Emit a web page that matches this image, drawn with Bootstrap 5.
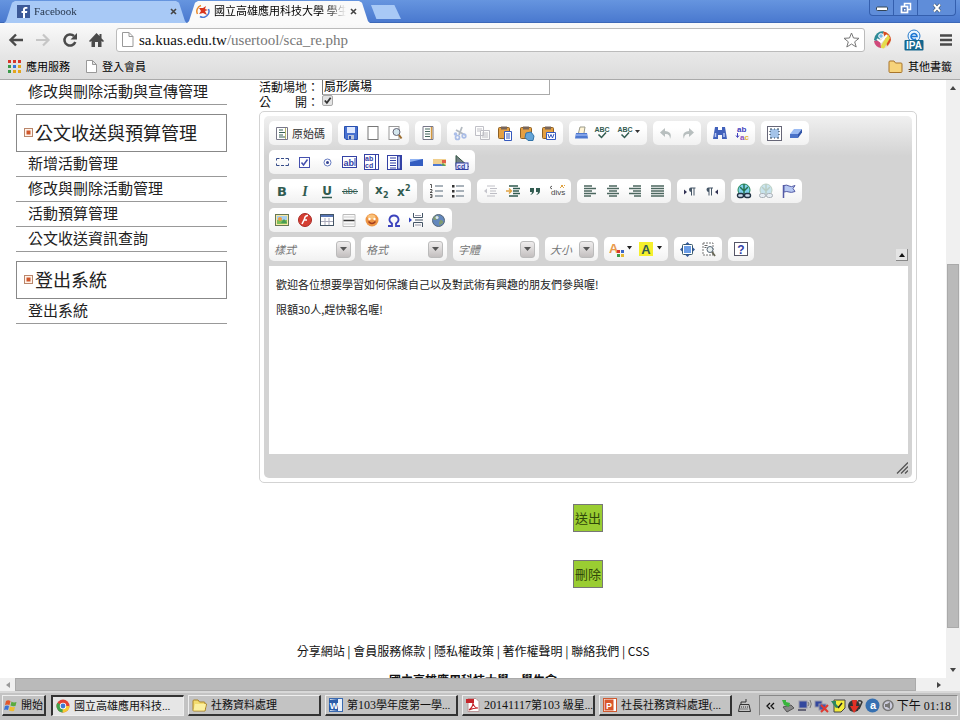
<!DOCTYPE html>
<html lang="zh-Hant">
<head>
<meta charset="utf-8">
<meta name="viewport" content="width=device-width, initial-scale=1">
<title>國立高雄應用科技大學 學生會</title>
<link href="https://cdn.jsdelivr.net/npm/bootstrap@5.3.0/dist/css/bootstrap.min.css" rel="stylesheet">
<style>
  body { font-family: "Noto Sans CJK TC", "Liberation Sans", sans-serif; font-size: 12px; line-height: 16px; color: #111; background: #fff; }
  button { background: none; border: 0; padding: 0; color: inherit; }
  svg { display: block; flex: none; }
  .serif-mix { font-family: "Liberation Serif", "Noto Sans CJK TC", serif; }
  a { color: inherit; text-decoration: none; }

  /* window title bar */
  .titlebar { height: 23px; background: linear-gradient(#6695df, #4a79cf); border-bottom: 1px solid #3c68b8; }
  .tab-shape { width: 183px; height: 22px; margin-top: 1px; padding: 0 10px 2px 13px; gap: 4px; font-size: 11px; clip-path: polygon(0 100%, 2px 92%, 8px 8%, 11px 0, calc(100% - 11px) 0, calc(100% - 8px) 8%, calc(100% - 2px) 92%, 100% 100%); background: #a8c9f6; color: #26364c; }
  .tab-shape.current { background: #fafafa; color: #000; padding-left: 9px; padding-right: 13px; }
  .tab-text { mask-image: linear-gradient(90deg, #000 85%, transparent); -webkit-mask-image: linear-gradient(90deg, #000 85%, transparent); white-space: nowrap; overflow: hidden; }
  .new-tab { width: 30px; height: 14px; margin: 5px 0 0 1px; background: #a8c9f6; clip-path: polygon(0 0, 78% 0, 100% 100%, 18% 100%); }
  .win-btns { height: 16px; border: 1px solid #345fae; border-top: 0; border-radius: 0 0 4px 4px; margin-right: 4px; background: #5f8dd9; }
  .win-btns button { width: 24px; border-right: 1px solid #345fae; display: flex; justify-content: center; align-items: center; }
  .win-btns button:last-child { width: 37px; border-right: 0; }

  /* navigation and bookmarks */
  .navrow { height: 33px; padding: 0 8px; background: linear-gradient(#fafafa, #e6e6e6); }
  .navbtn { width: 27px; height: 24px; display: flex; align-items: center; }
  .omnibox { height: 24px; border: 1px solid #bbb; border-radius: 3px; background: #fff; padding: 0 4px; gap: 5px; font-size: 15px; }
  .url-wrap { color: #777; white-space: nowrap; }
  .url-wrap b { font-weight: 400; color: #111; }
  .bookrow { height: 24px; padding: 0 8px 3px; background: linear-gradient(#e6e6e6, #dcdcdc); border-bottom: 1px solid #aaa; font-size: 11px; color: #000; }
  .bookrow a { gap: 5px; }

  /* page viewport */
  .pane { min-height: 0; }
  .page-area { min-width: 0; overflow: hidden; }
  .side-menu { flex: 0 0 211px; margin-left: 16px; }
  .side-link { display: block; height: 25px; padding: 0 12px; font-size: 15px; line-height: 22px; border-bottom: 1px solid #999; color: #222; }
  .side-head { height: 38px; margin-top: 9px; padding-left: 7px; gap: 2px; border: 1px solid #888; font-size: 18px; line-height: 24px; color: #222; font-weight: 400; margin-bottom: 0; padding-bottom: 2px; }
  .main-col { margin: 0 29px 0 32px; min-width: 0; }
  .lbl { width: 63px; line-height: 14px; }
  .place { width: 228px; height: 15px; border: 1px solid #aaa; border-top: 0; border-left-color: #777; font-size: 12px; line-height: 12px; padding: 0 1px 3px; outline: 0; }
  .tick { appearance: none; width: 11px; height: 11px; border: 1px solid #aaa; border-radius: 2px; margin: 0; background: #e4e4e4; }
  .tick:checked { background: #e4e4e4 url("data:image/svg+xml,%3Csvg xmlns='http://www.w3.org/2000/svg' viewBox='0 0 10 10'%3E%3Cpath d='M2 5l2.3 2.6L8.5 2' fill='none' stroke='%23333' stroke-width='2'/%3E%3C/svg%3E") center/9px 9px no-repeat; }

  /* rich text editor */
  .editor-frame { margin-top: 2px; border: 1px solid #d3d3d3; border-radius: 5px; padding: 4px; }
  .editor-skin { border-radius: 5px; padding: 5px 4px 0 5px; background: #d3d3d3 linear-gradient(#f0f0f0, #d3d3d3) 0 0/100% 40px no-repeat; }
  .tool-rows { display: flex; flex-direction: column; gap: 5px; padding-bottom: 5px; }
  .tool-row { display: flex; gap: 6px; }
  .grp { height: 24px; border-radius: 5px; background: linear-gradient(#fff 30%, #f1f1f1); display: flex; align-items: center; padding: 0 2px; flex: none; }
  .grp button { flex: 1; height: 22px; display: flex; align-items: center; justify-content: center; }
  .g1 { width: 26px; } .g2 { width: 48px; } .g3 { width: 71px; } .g4 { width: 94px; } .g5 { width: 116px; } .g8 { width: 183px; } .g9 { width: 206px; }
  .g-src { width: 63px; } .g-src button { gap: 4px; font-size: 11px; color: #333; }
  .g-spell { width: 78px; } .g-spell button:last-child, .g-color button { flex: 1 0 30px; }
  .g-spell button:last-child { flex-basis: 12px; }
  .g-color { width: 64px; }
  .faded { opacity: .4; }
  .pick { width: 86px; display: grid; align-items: center; padding: 0 4px 0 5px; }
  .pick.narrow { width: 53px; }
  .pick > * { grid-area: 1 / 1; }
  .pick select { appearance: none; border: 0; background: none; font-size: 11px; font-style: italic; color: #777; padding: 0; line-height: 16px; outline: 0; width: 100%; }
  .pick .drop { justify-self: end; pointer-events: none; width: 15px; height: 17px; border: 1px solid #bbb; border-radius: 3px; background: linear-gradient(#f0eeee, #c3bfbf); display: flex; align-items: center; justify-content: center; }
  .collapse-btn { width: 12px; height: 12px; border-right: 1px solid #888; border-bottom: 1px solid #888; background: #e4e4e4; display: flex; align-items: center; justify-content: center; }
  .edit-body { height: 188px; background: #fff; padding: 10px 7px; font-size: 11px; color: #222; }
  .edit-body p { margin: 0 0 9px; }
  .edit-foot { height: 24px; padding-top: 4px; }

  .act { width: 30px; height: 28px; border: 1px solid #777; background: #9acd32; font-size: 13px; color: #30480a; display: block; margin: 0 auto; }
  .act-box { padding-top: 21px; gap: 28px; }
  .foot { margin-top: 55px; }
  .foot-name { padding-top: 13px; }

  /* scroll bars */
  .vbar { width: 14px; background: #f0f0f0; }
  .hbar { height: 13px; background: #f0f0f0; }
  .thumb { background: #bababa; border: 1px solid #aaa; }
  .cap-v { height: 16px; } .cap-h { width: 15px; }
  .up-grow { flex: 169 0 0; } .thumb-grow { flex: 363 0 0; margin: 0 1px; } .down-grow { flex: 34 0 0; }
  .corner { width: 14px; }

  /* task bar */
  .taskbar { height: 29px; padding: 2px 2px 4px; background: #c3c3c3; border-top: 2px solid #d8d8d8; gap: 4px; font-size: 12px; }
  .task { flex: 0 1 133px; min-width: 0; height: 21px; padding: 0 3px; gap: 4px; display: flex; align-items: center; white-space: nowrap; font-size: 11px; background: #c3c3c3; border: 1px solid #eee; border-right: 2px solid #333; border-bottom: 2px solid #333; }
  .task.start { flex: 0 0 44px; padding: 0 1px; margin-right: 1px; gap: 3px; }
  .task.pressed { background: #e6e6e6; border: 1px solid #eee; border-left: 2px solid #333; border-top: 2px solid #333; }
  .task .latin { font-size: 12px; }
  .tray { height: 21px; border: 1px solid #888; border-right-color: #eee; border-bottom-color: #eee; padding: 0 6px; gap: 2px; flex: 0 0 198px; }
</style>
<script src="https://cdn.jsdelivr.net/npm/bootstrap@5.3.0/dist/js/bootstrap.bundle.min.js"></script>
</head>
<body class="vh-100 d-flex flex-column overflow-hidden m-0">

<header class="flex-shrink-0">
  <div class="titlebar d-flex align-items-start ps-1">
    <div class="tab-shape d-flex align-items-center serif-mix">
      <svg width="13" height="13" viewBox="0 0 13 13"><rect width="13" height="13" fill="#3b5998"/><path d="M8 13V8h2l.3-2H8V4.600q0-.9 1-.9h1.400V2H8.500Q6 2 6 4.500V6H4.500v2H6v5z" fill="#fff"/></svg>
      <span class="tab-text flex-grow-1">Facebook</span>
      <button aria-label="關閉 Facebook"><svg width="7" height="7" viewBox="0 0 7 7"><path d="M1 1l5 5M6 1L1 6" stroke="#444" stroke-width="1.600"/></svg></button>
    </div>
    <div class="tab-shape current d-flex align-items-center serif-mix">
      <svg width="14" height="14" viewBox="0 0 14 14"><path d="M1.500 10A6 6 0 0 1 5 1.500" fill="none" stroke="#e98a2b" stroke-width="1.500"/><path d="M12.500 5A6 6 0 0 1 4 12.500" fill="none" stroke="#4b79d6" stroke-width="1.500"/><path d="M3 4h4l3-2-1 3 3 1-3 1 2 4-4-2-4 1 2-3z" fill="#d8351d"/></svg>
      <span class="tab-text flex-grow-1">國立高雄應用科技大學 學生會</span>
      <button aria-label="關閉分頁"><svg width="7" height="7" viewBox="0 0 7 7"><path d="M1 1l5 5M6 1L1 6" stroke="#444" stroke-width="1.600"/></svg></button>
    </div>
    <button class="new-tab" aria-label="新分頁"></button>
    <div class="win-btns d-flex ms-auto">
      <button aria-label="最小化"><svg width="12" height="6" viewBox="0 0 12 6"><rect x=".5" y="2" width="11" height="3.500" rx="1" fill="#fff" stroke="#345"/></svg></button>
      <button aria-label="還原"><svg width="12" height="12" viewBox="0 0 12 12"><rect x="4.500" y="1.500" width="6" height="6" fill="none" stroke="#fff" stroke-width="1.500"/><rect x="1.500" y="4.500" width="6" height="6" fill="#5077bb" stroke="#fff" stroke-width="1.700"/><rect x="4" y="7" width="1.500" height="1.500" fill="#fff"/></svg></button>
      <button aria-label="關閉"><svg width="10" height="10" viewBox="0 0 10 10"><path d="M2 1.500l6 7M8 1.500l-6 7" stroke="#345" stroke-width="3.200"/><path d="M2 1.500l6 7M8 1.500l-6 7" stroke="#fff" stroke-width="2"/></svg></button>
    </div>
  </div>

  <nav class="navrow d-flex align-items-center" aria-label="瀏覽">
    <button class="navbtn" aria-label="上一頁"><svg width="16" height="14" viewBox="0 0 16 14"><path d="M15 7H3M8 1.500L2.500 7 8 12.500" fill="none" stroke="#4a4a4a" stroke-width="2.400"/></svg></button>
    <button class="navbtn" aria-label="下一頁"><svg width="16" height="14" viewBox="0 0 16 14"><path d="M1 7h12M8 1.500L13.500 7 8 12.500" fill="none" stroke="#c6c6c6" stroke-width="2.200"/></svg></button>
    <button class="navbtn" aria-label="重新載入"><svg width="16" height="16" viewBox="0 0 16 16"><path d="M13.300 10A5.600 5.600 0 1 1 12 4" fill="none" stroke="#4a4a4a" stroke-width="2.500"/><path d="M15 1v6.500H8.500z" fill="#4a4a4a"/></svg></button>
    <button class="navbtn" aria-label="首頁"><svg width="15" height="16" viewBox="0 0 15 16"><path d="M7.500 1L0 9l1 1 1.500-1v6h3.500v-5h3v5h3.500V9l1.500 1 1-1-2.500-2.800V2h-2v2z" fill="#4a4a4a"/></svg></button>
    <div class="omnibox d-flex align-items-center flex-grow-1 serif-mix">
      <svg width="13" height="15" viewBox="0 0 13 15"><path d="M1.500.500h6.500l4 4v10h-10.500zM8 .500v4h4" fill="#fff" stroke="#999"/></svg>
      <a class="url-wrap flex-grow-1" href="#"><b>sa.kuas.edu.tw</b>/usertool/sca_re.php</a>
      <button aria-label="加入書籤"><svg width="17" height="16" viewBox="0 0 17 16"><path d="M8.500 1l2 5 5.500.300-4.300 3.500 1.500 5.200-4.700-3-4.700 3 1.500-5.200L1 6.300 6.500 6z" fill="#fff" stroke="#777" stroke-linejoin="round"/></svg></button>
    </div>
    <button class="ms-2" aria-label="擴充功能"><svg width="19" height="18" viewBox="0 0 19 18"><circle cx="9.500" cy="9" r="8.500" fill="#e7dcc7"/><path d="M1 9a8.500 8.500 0 0 1 10-8.500L5 11z" fill="#2e8b99"/><path d="M10 .500A8.500 8.500 0 0 1 18 9q-2 5-4 6z" fill="#d84a22"/><path d="M15 3l2 4-6 10.500-4-1z" fill="#e4dc4a"/><path d="M1 10l6-1 1 8A8.500 8.500 0 0 1 1 10z" fill="#d04a7c"/><path d="M4 8l4 3 6-7" stroke="#fff" stroke-width="2" fill="none"/><circle cx="8" cy="5" r="2.300" fill="#7ab9e8" stroke="#fff"/></svg></button>
    <button class="ms-2 ps-1" aria-label="IPA"><svg width="20" height="22" viewBox="0 0 20 22"><circle cx="10" cy="7" r="6" fill="#eaf6ff" stroke="#2a7bcb"/><path d="M7 7.500h6a3 3 0 1 0-1 2.300" fill="none" stroke="#1d76d2" stroke-width="1.600"/><rect x=".500" y="11" width="19" height="10.500" rx="1" fill="#14678e"/><text x="10" y="20" text-anchor="middle" font-family="Liberation Sans" font-weight="700" font-size="10" fill="#fff">IPA</text></svg></button>
    <button class="ms-3" aria-label="選單"><svg width="12" height="14" viewBox="0 0 12 14"><path d="M0 2.500h12M0 7h12M0 11.500h12" stroke="#4a4a4a" stroke-width="2.500"/></svg></button>
  </nav>

  <div class="bookrow d-flex align-items-center">
    <a href="#" class="d-flex align-items-center"><svg width="13" height="13" viewBox="0 0 13 13"><path d="M0 0h3v3H0zM5 0h3v3H5zM10 0h3v3h-3z" fill="#d8362a"/><path d="M0 5h3v3H0z" fill="#3a9a49"/><path d="M5 5h3v3H5z" fill="#3673dc"/><path d="M10 5h3v3h-3zM5 10h3v3H5zM10 10h3v3h-3z" fill="#e4a51c"/><path d="M0 10h3v3H0z" fill="#3a9a49"/></svg>應用服務</a>
    <a href="#" class="d-flex align-items-center ms-3"><svg width="11" height="13" viewBox="0 0 11 13"><path d="M.500.500h6l4 4v8H.500zM6.500.500v4h4" fill="#fff" stroke="#999"/></svg>登入會員</a>
    <a href="#" class="d-flex align-items-center ms-auto"><svg width="15" height="13" viewBox="0 0 15 13"><path d="M1 11.500V2q0-1 1-1h4l1.500 2H13q1 0 1 1v7.500q0 1-1 1H2q-1 0-1-1z" fill="#f6d37b" stroke="#a8752c"/></svg>其他書籤</a>
  </div>
</header>

<div class="pane d-flex flex-grow-1">
  <div class="page-area flex-grow-1">
    <div class="d-flex">
      <aside class="side-menu">
        <a class="side-link" href="#">修改與刪除活動與宣傳管理</a>
        <h2 class="side-head d-flex align-items-center"><svg width="9" height="9" viewBox="0 0 9 9"><rect x=".500" y=".500" width="8" height="8" fill="#fff3ea" stroke="#b9866b"/><rect x="2.500" y="2.500" width="4" height="4" fill="#d0572b"/></svg>公文收送與預算管理</h2>
        <a class="side-link" href="#">新增活動管理</a>
        <a class="side-link" href="#">修改與刪除活動管理</a>
        <a class="side-link" href="#">活動預算管理</a>
        <a class="side-link" href="#">公文收送資訊查詢</a>
        <h2 class="side-head d-flex align-items-center"><svg width="9" height="9" viewBox="0 0 9 9"><rect x=".500" y=".500" width="8" height="8" fill="#fff3ea" stroke="#b9866b"/><rect x="2.500" y="2.500" width="4" height="4" fill="#d0572b"/></svg>登出系統</h2>
        <a class="side-link" href="#">登出系統</a>
      </aside>

      <main class="main-col flex-grow-1">
        <div class="d-flex align-items-start"><label class="lbl" for="place">活動場地：</label><input id="place" class="place" value="扇形廣場"></div>
        <div class="d-flex align-items-start"><label class="lbl" for="open">公　　開：</label><input id="open" type="checkbox" class="tick" checked></div>

        <div class="editor-frame">
          <div class="editor-skin">
            <div class="tool-rows">
              <div class="tool-row">
                <div class="grp g-src"><button><svg width="12" height="14" viewBox="0 0 12 14"><path d="M.500 1.500h11v12H.500z" fill="#fff" stroke="#778"/><path d="M3 4h4M3 6.500h6M3 9h4M3 11h6" stroke="#365f55" stroke-width="1.200"/><path d="M9.500 2v11" stroke="#b6b36a"/></svg>原始碼</button></div>
                <div class="grp g3">
                  <button aria-label="儲存"><svg width="14" height="14" viewBox="0 0 14 14"><path d="M.500.500h13v13H2l-1.500-1.500z" fill="#4871d0" stroke="#284fae"/><path d="M3 1h8v6H3z" fill="#dfe9ff"/><path d="M4 9h6v4.500H4z" fill="#b9c3d8"/><path d="M5 10h2v3H5z" fill="#284fae"/></svg></button>
                  <button aria-label="新頁"><svg width="12" height="14" viewBox="0 0 12 14"><rect x="1" y=".500" width="10" height="13" fill="#fff" stroke="#777"/></svg></button>
                  <button aria-label="預覽"><svg width="15" height="14" viewBox="0 0 15 14"><rect x="1" y=".500" width="10" height="13" fill="#fff" stroke="#999"/><circle cx="8.500" cy="6" r="3.500" fill="#d4e6ed" stroke="#667"/><path d="M11 9l2.500 3.500" stroke="#9c6d2f" stroke-width="2"/></svg></button>
                </div>
                <div class="grp g1"><button aria-label="樣版"><svg width="12" height="14" viewBox="0 0 12 14"><path d="M1 .500h10v13H1z" fill="#fff" stroke="#778"/><path d="M3 3h5M3 5.500h5M3 8h5M3 10.500h5" stroke="#46665e"/><path d="M9.500 1v12" stroke="#d59a3f" stroke-width="1.500"/></svg></button></div>
                <div class="grp g5">
                  <button class="faded" aria-label="剪下"><svg width="14" height="15" viewBox="0 0 14 15"><path d="M9 1L6 9M3 4l9 5" stroke="#456" stroke-width="1.800"/><circle cx="4.500" cy="11.500" r="2" fill="none" stroke="#3867cf" stroke-width="1.700"/><circle cx="11" cy="10" r="1.800" fill="none" stroke="#3867cf" stroke-width="1.700"/><circle cx="2.500" cy="8" r="1.800" fill="#3867cf"/></svg></button>
                  <button class="faded" aria-label="複製"><svg width="15" height="14" viewBox="0 0 15 14"><path d="M.500.500h8v9h-8zM5.500 4.500h9v9h-9z" fill="#fff" stroke="#667"/><path d="M2 3h5M2 5h3M7 7h6M7 9h6M7 11h6" stroke="#667"/></svg></button>
                  <button aria-label="貼上"><svg width="15" height="15" viewBox="0 0 15 15"><rect x=".500" y="1.500" width="11" height="11" rx="1" fill="#e4a042" stroke="#8d6025"/><path d="M3 .500h6v3H3z" fill="#77655a"/><path d="M6.500 5.500h7v9h-7z" fill="#fff" stroke="#3458bd"/><path d="M8 8h4M8 10h4M8 12h4" stroke="#3458bd"/></svg></button>
                  <button aria-label="貼為文字"><svg width="15" height="15" viewBox="0 0 15 15"><rect x=".500" y="1.500" width="11" height="11" rx="1" fill="#e4a042" stroke="#8d6025"/><path d="M3 .500h6v3H3z" fill="#77655a"/><path d="M6 7l5-1 3 4-1 4.500H8l-3-3z" fill="#63a4d7" stroke="#3274a9"/></svg></button>
                  <button aria-label="自 Word 貼上"><svg width="15" height="15" viewBox="0 0 15 15"><rect x=".500" y="1.500" width="11" height="11" rx="1" fill="#e4a042" stroke="#8d6025"/><path d="M3 .500h6v3H3z" fill="#77655a"/><path d="M4.500 6.500h9v7h-9z" fill="#fff" stroke="#3458bd"/><path d="M6 8l1.300 4L9 8.500l1.500 3.500L12 8" fill="none" stroke="#3458bd"/></svg></button>
                </div>
                <div class="grp g-spell">
                  <button aria-label="列印"><svg width="13" height="14" viewBox="0 0 13 14"><path d="M3.500 7L5 1h5l-1 6" fill="#fff4d6" stroke="#998"/><path d="M1 7h11l1 5.500H0z" fill="#4e79d0"/><path d="M1 9h11" stroke="#b4cbff"/></svg></button>
                  <button aria-label="拼字檢查"><svg width="16" height="16" viewBox="0 0 16 16"><text x="8" y="7" text-anchor="middle" font-family="Liberation Sans" font-size="7" font-weight="700" fill="#315b50">ABC</text><path d="M4.500 9.500l3 3 4.500-5" fill="none" stroke="#315b50" stroke-width="1.500"/></svg></button>
                  <button aria-label="即時拼字檢查"><svg width="24" height="16" viewBox="0 0 24 16"><text x="8" y="7" text-anchor="middle" font-family="Liberation Sans" font-size="7" font-weight="700" fill="#315b50">ABC</text><path d="M4.500 9.500l3 3 4.500-5" fill="none" stroke="#315b50" stroke-width="1.500"/><path d="M18 5h5l-2.500 3z" fill="#333"/></svg></button>
                </div>
                <div class="grp g2">
                  <button class="faded" aria-label="復原"><svg width="12" height="11" viewBox="0 0 12 11"><path d="M5 0L0 4.500 5 9V6q5-.5 5 5 3-7-5-8z" fill="#566"/></svg></button>
                  <button class="faded" aria-label="重複"><svg width="12" height="11" viewBox="0 0 12 11"><path d="M7 0l5 4.500L7 9V6q-5-.5-5 5-3-7 5-8z" fill="#566"/></svg></button>
                </div>
                <div class="grp g2">
                  <button aria-label="尋找"><svg width="14" height="13" viewBox="0 0 14 13"><path d="M2 0h3v3h4V0h3l2 12H9V8H5v4H0z" fill="#4161bb"/><path d="M2.500 6v4M11 6v4" stroke="#b6c6f3" stroke-width="1.500"/></svg></button>
                  <button aria-label="取代"><svg width="15" height="16" viewBox="0 0 15 16"><text x="2" y="7" font-family="Liberation Sans" font-size="8" font-weight="700" fill="#4040bd">ab</text><text x="5" y="15" font-family="Liberation Sans" font-size="8" font-weight="700" fill="#8b4fc1">a<tspan fill="#e5b436">c</tspan></text><path d="M2.500 8v4M1 10.500l1.500 2 1.500-2" stroke="#4040bd" fill="none"/></svg></button>
                </div>
                <div class="grp g2">
                  <button aria-label="全選"><svg width="15" height="15" viewBox="0 0 15 15"><rect x=".500" y=".500" width="14" height="14" fill="#fff" stroke="#667"/><rect x="3" y="3" width="9" height="9" fill="#a4c4e9"/><path d="M3 3h2M7 3h1M10 3h2M3 12h2M7 12h1M10 12h2M3 5v1M3 8v1M12 5v1M12 8v1" stroke="#345" stroke-width="1.200"/></svg></button>
                  <button aria-label="清除格式"><svg width="14" height="11" viewBox="0 0 14 11"><path d="M5 1h8L9 6H1z" fill="#9bbbf3"/><path d="M1 6h8v4H1z" fill="#4b73c9"/><path d="M9 6l4-5v3.500L9 10z" fill="#3155a8"/></svg></button>
                </div>
              </div>

              <div class="tool-row">
                <div class="grp g9">
                  <button aria-label="表單"><svg width="13" height="8" viewBox="0 0 13 8"><path d="M.500 2.500v-2h3M5 .500h3M9.500.500h3v2M12.500 5.500v2h-3M8 7.500H5M3.500 7.500h-3v-2" fill="none" stroke="#344a88"/></svg></button>
                  <button aria-label="核取方塊"><svg width="11" height="11" viewBox="0 0 11 11"><rect x=".500" y=".500" width="10" height="10" fill="#fff" stroke="#4550ae"/><path d="M2.500 5.500l2 2.500 4-5.500" fill="none" stroke="#4550ae" stroke-width="1.500"/></svg></button>
                  <button aria-label="選項按鈕"><svg width="9" height="9" viewBox="0 0 9 9"><circle cx="4.500" cy="4.500" r="3.500" fill="#fff" stroke="#667bc1"/><circle cx="4.500" cy="4.500" r="1.500" fill="#344392"/></svg></button>
                  <button aria-label="文字方塊"><svg width="15" height="12" viewBox="0 0 15 12"><rect x=".500" y=".500" width="14" height="11" fill="#fff" stroke="#3341a5"/><text x="1.500" y="9.500" font-family="Liberation Sans" font-size="9" font-weight="700" fill="#3341a5">ab</text><path d="M13 2v8" stroke="#3341a5"/></svg></button>
                  <button aria-label="文字區域"><svg width="15" height="16" viewBox="0 0 15 16"><rect x=".500" y=".500" width="14" height="15" fill="#fff" stroke="#3341a5"/><text x="1" y="7" font-family="Liberation Sans" font-size="7" font-weight="700" fill="#3341a5">ab</text><text x="1" y="14" font-family="Liberation Sans" font-size="7" font-weight="700" fill="#3341a5">cd</text><path d="M11.500 1v14" stroke="#3341a5"/></svg></button>
                  <button aria-label="選單欄位"><svg width="15" height="15" viewBox="0 0 15 15"><rect x=".500" y=".500" width="14" height="14" fill="#fff" stroke="#3341a5"/><path d="M3 3h6M3 5.500h6M3 8h6M3 10.500h6M3 13h6" stroke="#3341a5"/><path d="M10.500 1h3v13h-3z" fill="#aab6e2" stroke="#3341a5"/></svg></button>
                  <button aria-label="按鈕"><svg width="13" height="7" viewBox="0 0 13 7"><path d="M0 0h13v7H0z" fill="#345ec1"/><path d="M0 3L13 0H0z" fill="#8fb2f2"/></svg></button>
                  <button aria-label="影像按鈕"><svg width="13" height="7" viewBox="0 0 13 7"><path d="M0 0h13v7H0z" fill="#f0cf8d"/><path d="M7 7l3-3 3 3z" fill="#54a159"/><path d="M9 1h4v3H9z" fill="#e16149"/><path d="M0 5h8l2 2H0z" fill="#4b77d2"/></svg></button>
                  <button aria-label="隱藏欄位"><svg width="14" height="15" viewBox="0 0 14 15"><path d="M1 .500l12.500 11H1z" fill="#738083" stroke="#354"/><rect x="1" y="8" width="12" height="6.500" fill="#eef" stroke="#3341a5"/><text x="2" y="13.500" font-family="Liberation Sans" font-size="7" font-weight="700" fill="#3341a5">cd</text></svg></button>
                </div>
              </div>

              <div class="tool-row">
                <div class="grp g4">
                  <button aria-label="粗體"><svg width="14" height="14" viewBox="0 0 14 14"><text x="7" y="12" text-anchor="middle" font-family="DejaVu Sans" font-size="13" font-weight="700" fill="#315b50">B</text></svg></button>
                  <button aria-label="斜體"><svg width="14" height="14" viewBox="0 0 14 14"><text x="7" y="12" text-anchor="middle" font-family="Liberation Serif" font-size="14" font-weight="700" font-style="italic" fill="#315b50">I</text></svg></button>
                  <button aria-label="底線"><svg width="14" height="15" viewBox="0 0 14 15"><text x="7" y="11" text-anchor="middle" font-family="DejaVu Sans" font-size="12" font-weight="700" fill="#315b50">U</text><path d="M2 13.500h10" stroke="#315b50" stroke-width="1.500"/></svg></button>
                  <button aria-label="刪除線"><svg width="16" height="14" viewBox="0 0 16 14"><text x="8" y="10" text-anchor="middle" font-family="Liberation Sans" font-size="9" fill="#315b50">abc</text><path d="M0 7.500h16" stroke="#315b50"/></svg></button>
                </div>
                <div class="grp g2">
                  <button aria-label="下標"><svg width="15" height="15" viewBox="0 0 15 15"><text x="0" y="10" font-family="DejaVu Sans" font-size="12" font-weight="700" fill="#315b50">x</text><text x="8" y="14" font-family="DejaVu Sans" font-size="8" font-weight="700" fill="#315b50">2</text></svg></button>
                  <button aria-label="上標"><svg width="15" height="15" viewBox="0 0 15 15"><text x="0" y="12" font-family="DejaVu Sans" font-size="12" font-weight="700" fill="#315b50">x</text><text x="8" y="7" font-family="DejaVu Sans" font-size="8" font-weight="700" fill="#315b50">2</text></svg></button>
                </div>
                <div class="grp g2">
                  <button aria-label="編號清單"><svg width="14" height="14" viewBox="0 0 14 14"><path d="M6 2h8M6 7h8M6 12h8" stroke="#567"/><path d="M1 .500h1.500v3.500M1 5.500h2v1.500l-2 1.500h2.500M1 10.500h2v3H1M1.500 12H3" fill="none" stroke="#333" stroke-width=".800"/></svg></button>
                  <button aria-label="項目清單"><svg width="14" height="14" viewBox="0 0 14 14"><path d="M5 2h8M5 7h8M5 12h8" stroke="#567"/><path d="M1 1h2.500v2.500H1zM1 6h2.500v2.500H1zM1 11h2.500v2.500H1z" fill="#333"/></svg></button>
                </div>
                <div class="grp g4">
                  <button class="faded" aria-label="減少縮排"><svg width="14" height="12" viewBox="0 0 14 12"><path d="M4 1h8M7 3.500h7M7 6h6M7 8.500h7M4 11h8" stroke="#667"/><path d="M4 3.500L1 6l3 2.500z" fill="#778"/></svg></button>
                  <button aria-label="增加縮排"><svg width="14" height="12" viewBox="0 0 14 12"><path d="M3 1h9M7 3.500h7M7 6h6M7 8.500h7M3 11h9" stroke="#315b50" stroke-width="1.300"/><path d="M0 6h5M3 3.500L5.500 6 3 8.500" stroke="#dfa343" stroke-width="1.400" fill="none"/></svg></button>
                  <button aria-label="引文"><svg width="12" height="9" viewBox="0 0 12 9"><path d="M1 1h4v3q0 3-4 4 2-1 2-3H1zM7 1h4v3q0 3-4 4 2-1 2-3H7z" fill="#315b50"/></svg></button>
                  <button aria-label="DIV 容器"><svg width="18" height="14" viewBox="0 0 18 14"><path d="M3 2L1 3.500 3 5" fill="none" stroke="#555"/><text x="2" y="11" font-family="Liberation Sans" font-size="8" fill="#444">divs</text><path d="M11 4l3-3M12 1l3 3M15 2l1-1" stroke="#dfa343"/></svg></button>
                </div>
                <div class="grp g4">
                  <button aria-label="靠左"><svg width="12" height="12" viewBox="0 0 12 12"><path d="M0 1h8M0 3.500h12M0 6h8M0 8.500h12M0 11h7" stroke="#4c675f" stroke-width="1.300"/></svg></button>
                  <button aria-label="置中"><svg width="12" height="12" viewBox="0 0 12 12"><path d="M2 1h8M0 3.500h12M2 6h8M0 8.500h12M2 11h8" stroke="#4c675f" stroke-width="1.300"/></svg></button>
                  <button aria-label="靠右"><svg width="12" height="12" viewBox="0 0 12 12"><path d="M4 1h8M0 3.500h12M4 6h8M0 8.500h12M5 11h7" stroke="#4c675f" stroke-width="1.300"/></svg></button>
                  <button aria-label="左右對齊"><svg width="13" height="12" viewBox="0 0 13 12"><path d="M0 1h13M0 3.500h13M0 6h13M0 8.500h13M0 11h13" stroke="#4c675f" stroke-width="1.300"/></svg></button>
                </div>
                <div class="grp g2">
                  <button aria-label="由左至右"><svg width="14" height="9" viewBox="0 0 14 9"><path d="M1 2.500v5L4 5z" fill="#335"/><path d="M12.500.500H8q-2 0-2 2t2 2.500V8.500h1V1.500h1.500v7h1v-7h1z" fill="#456"/></svg></button>
                  <button aria-label="由右至左"><svg width="14" height="9" viewBox="0 0 14 9"><path d="M13 2.500v5L10 5z" fill="#335"/><path d="M8 .500H3.500q-2 0-2 2t2 2.500V8.500h1V1.500H6v7h1v-7h1z" fill="#456"/></svg></button>
                </div>
                <div class="grp g3">
                  <button aria-label="超連結"><svg width="16" height="16" viewBox="0 0 16 16"><circle cx="8" cy="7" r="6" fill="#7fd0ec" stroke="#285"/><path d="M8 1v10M4 4l4 4 4-4" stroke="#26734e" stroke-width="1.500" fill="none"/><rect x="1.500" y="10.500" width="6" height="4" rx="2" fill="#cde" stroke="#234" stroke-width="1.400"/><rect x="8.500" y="10.500" width="6" height="4" rx="2" fill="#cde" stroke="#234" stroke-width="1.400"/></svg></button>
                  <button class="faded" aria-label="移除超連結"><svg width="16" height="16" viewBox="0 0 16 16"><circle cx="8" cy="7" r="6" fill="#7cc0da" stroke="#586"/><path d="M8 1v10M4 4l4 4 4-4" stroke="#57866e" stroke-width="1.500" fill="none"/><rect x="1.500" y="10.500" width="6" height="4" rx="2" fill="#cde" stroke="#345"/><rect x="8.500" y="10.500" width="6" height="4" rx="2" fill="#cde" stroke="#345"/></svg></button>
                  <button aria-label="錨點"><svg width="14" height="14" viewBox="0 0 14 14"><path d="M1.500 1v13" stroke="#545ba5" stroke-width="1.500"/><path d="M2 1.500q3-1 5 .5t6-.5l-2 3 2 3q-4 1.500-6 .500t-5 0z" fill="#b6c8f2" stroke="#545ba5"/></svg></button>
                </div>
              </div>

              <div class="tool-row">
                <div class="grp g8">
                  <button aria-label="影像"><svg width="14" height="12" viewBox="0 0 14 12"><rect x=".500" y=".500" width="13" height="11" fill="#f8e9a5" stroke="#675"/><path d="M2 6h10v4H2z" fill="#7cbf5b"/><path d="M2 2h10v4H2z" fill="#a5cfef"/><circle cx="5" cy="5" r="2" fill="#ef9e42"/><path d="M6 9l3-4 3 4z" fill="#4a9a57"/></svg></button>
                  <button aria-label="Flash"><svg width="14" height="14" viewBox="0 0 14 14"><circle cx="7" cy="7" r="6.500" fill="#d53f33" stroke="#a92a25"/><path d="M10 2.500Q7 2.500 6.500 6L4 11M5.500 7h3.500" stroke="#fff" stroke-width="1.600" fill="none"/></svg></button>
                  <button aria-label="表格"><svg width="14" height="12" viewBox="0 0 14 12"><rect x=".500" y=".500" width="13" height="11" fill="#fff" stroke="#456"/><path d="M1 1h12v2H1z" fill="#5876b6"/><path d="M1 7.500h12M5 4v7M9 4v7" stroke="#aab"/></svg></button>
                  <button aria-label="水平線"><svg width="14" height="13" viewBox="0 0 14 13"><path d="M1 .500h12v12H1z" fill="#fafafa" stroke="#bbb"/><path d="M2 3h10M2 10h10" stroke="#ccc"/><path d="M1.500 6.500h11" stroke="#333" stroke-width="1.500"/></svg></button>
                  <button aria-label="表情符號"><svg width="14" height="14" viewBox="0 0 14 14"><circle cx="7" cy="7" r="6.500" fill="#ed9444"/><ellipse cx="6.500" cy="4" rx="4" ry="2.500" fill="#f9c17a"/><circle cx="4.500" cy="6" r="1.200" fill="#fff"/><circle cx="9.500" cy="6" r="1.200" fill="#fff"/><path d="M3.500 8.500q3.500 4 7 0" stroke="#a13d20" stroke-width="1.400" fill="none"/></svg></button>
                  <button aria-label="特殊符號"><svg width="14" height="13" viewBox="0 0 14 13"><path d="M1 12h4V9.500Q2 7.500 2.500 5 3.500 1.500 7 1.500T11.500 5q.500 2.500-2.500 4.500V12h4" fill="none" stroke="#3c43bd" stroke-width="1.800"/></svg></button>
                  <button aria-label="分頁"><svg width="15" height="14" viewBox="0 0 15 14"><path d="M4.500 0v4.500h9V0M4.500 14V9.500h9V14M6 7h8" fill="none" stroke="#456"/><path d="M6 2.500h6M6 12h6" stroke="#99a"/><path d="M0 4.500v5L3 7z" fill="#3445bf"/></svg></button>
                  <button aria-label="IFrame"><svg width="13" height="13" viewBox="0 0 13 13"><circle cx="6.500" cy="6.500" r="6" fill="#6387bd" stroke="#567"/><path d="M3 2q4-1 4 1T4 6Q1 6 1 4zM8 6q4 0 3 3l-3 2q-2-1-1-2z" fill="#819b72"/><circle cx="5" cy="3.500" r="1.500" fill="#d8e6f9"/></svg></button>
                </div>
              </div>

              <div class="tool-row">
                <div class="grp pick"><select aria-label="樣式"><option>樣式</option></select><span class="drop"><svg width="7" height="4" viewBox="0 0 7 4"><path d="M0 0h7L3.500 4z" fill="#555"/></svg></span></div>
                <div class="grp pick"><select aria-label="格式"><option>格式</option></select><span class="drop"><svg width="7" height="4" viewBox="0 0 7 4"><path d="M0 0h7L3.500 4z" fill="#555"/></svg></span></div>
                <div class="grp pick"><select aria-label="字體"><option>字體</option></select><span class="drop"><svg width="7" height="4" viewBox="0 0 7 4"><path d="M0 0h7L3.500 4z" fill="#555"/></svg></span></div>
                <div class="grp pick narrow"><select aria-label="大小"><option>大小</option></select><span class="drop"><svg width="7" height="4" viewBox="0 0 7 4"><path d="M0 0h7L3.500 4z" fill="#555"/></svg></span></div>
                <div class="grp g-color">
                  <button aria-label="文字顏色"><svg width="24" height="16" viewBox="0 0 24 16"><text x="0" y="12" font-family="Liberation Sans" font-size="13" font-weight="700" fill="#e99a4c">A</text><path d="M8 9h3v3H8z" fill="#d83a2c"/><path d="M12 9h3v3h-3z" fill="#3b66c9"/><path d="M8 13h3v3H8z" fill="#3e9b4a"/><path d="M12 13h3v3h-3z" fill="#e4b834"/><path d="M18 5h5l-2.500 3.500z" fill="#222"/></svg></button>
                  <button aria-label="背景顏色"><svg width="24" height="16" viewBox="0 0 24 16"><path d="M0 1h14v14H0z" fill="#f5ef2c"/><text x="7" y="13" text-anchor="middle" font-family="Liberation Sans" font-size="13" font-weight="700" fill="#315b50">A</text><path d="M18 5h5l-2.500 3.500z" fill="#222"/></svg></button>
                </div>
                <div class="grp g2">
                  <button aria-label="最大化"><svg width="15" height="15" viewBox="0 0 15 15"><rect x="2.500" y="2.500" width="10" height="10" rx="1" fill="#fff" stroke="#356"/><rect x="4" y="4" width="7" height="7" fill="#6b9de7"/><path d="M7.500 0L10 2.500H5zM7.500 15L5 12.500h5zM0 7.500L2.500 5v5zM15 7.500L12.500 10V5z" fill="#345b9d"/></svg></button>
                  <button aria-label="顯示區塊"><svg width="14" height="15" viewBox="0 0 14 15"><rect x="1" y="1" width="10" height="12" fill="#fff" stroke="#777" stroke-dasharray="2 1"/><path d="M2.500 3.500h3M2.500 5.500h2" stroke="#666"/><circle cx="8" cy="7.500" r="3" fill="#e9f0f0" stroke="#567"/><path d="M10 10l3 4" stroke="#665" stroke-width="1.800"/></svg></button>
                </div>
                <div class="grp g1"><button aria-label="關於"><svg width="14" height="14" viewBox="0 0 14 14"><rect x=".500" y=".500" width="13" height="13" fill="#fff" stroke="#556"/><text x="7" y="11.500" text-anchor="middle" font-family="Liberation Sans" font-size="12" font-weight="700" fill="#3340a5">?</text></svg></button></div>
                <button class="collapse-btn ms-auto align-self-end" aria-label="收合工具列"><svg width="6" height="4" viewBox="0 0 6 4"><path d="M0 4h6L3 0z" fill="#111"/></svg></button>
              </div>
            </div>
            <div class="edit-body" role="textbox" contenteditable="true" spellcheck="false" aria-label="活動內容">
              <p>歡迎各位想要學習如何保護自己以及對武術有興趣的朋友們參與喔!</p>
              <p>限額30人,趕快報名喔!</p>
            </div>
            <div class="edit-foot d-flex justify-content-end align-items-center"><svg width="12" height="12" viewBox="0 0 12 12"><path d="M1 11.500L12 .500M5 11.500l7-7M9 11.500l3-3" stroke="#555" stroke-width="1.300"/></svg></div>
          </div>
        </div>

        <div class="act-box d-flex flex-column">
          <button class="act">送出</button>
          <button class="act">刪除</button>
        </div>
      </main>
    </div>
    <footer class="foot text-center">
      <div><a href="#">分享網站</a> | <a href="#">會員服務條款</a> | <a href="#">隱私權政策</a> | <a href="#">著作權聲明</a> | <a href="#">聯絡我們</a> | <a href="#">CSS</a></div>
      <div class="foot-name fw-bold">國立高雄應用科技大學　學生會</div>
    </footer>
  </div>
  <div class="vbar d-flex flex-column flex-shrink-0">
    <div class="cap-v d-flex align-items-center justify-content-center"><svg width="6" height="4" viewBox="0 0 6 4"><path d="M0 4h6L3 0z" fill="#444"/></svg></div>
    <div class="up-grow"></div><div class="thumb thumb-grow"></div><div class="down-grow"></div>
    <div class="cap-v d-flex align-items-center justify-content-center"><svg width="6" height="4" viewBox="0 0 6 4"><path d="M0 0h6L3 4z" fill="#444"/></svg></div>
  </div>
</div>
<div class="hbar d-flex flex-shrink-0">
  <div class="cap-h d-flex align-items-center justify-content-center"><svg width="4" height="6" viewBox="0 0 4 6"><path d="M4 0v6L0 3z" fill="#999"/></svg></div>
  <div class="thumb flex-grow-1"></div>
  <div class="cap-h"></div>
  <div class="cap-h d-flex align-items-center justify-content-center"><svg width="4" height="6" viewBox="0 0 4 6"><path d="M0 0v6l4-3z" fill="#444"/></svg></div>
  <div class="corner"></div>
</div>

<footer class="taskbar d-flex align-items-center flex-shrink-0 serif-mix">
  <button class="task start"><svg width="14" height="13" viewBox="0 0 14 13"><path d="M2 2q2-1.500 4.500 0L5.500 6Q3 5 1 6z" fill="#e2572b"/><path d="M7.500 2.500q2 1.500 5 .500l-1 4q-3 .500-5-.500z" fill="#5bab3d"/><path d="M1 7q2-1 4 0l-1 4Q2 10 0 11z" fill="#3a71d6"/><path d="M6 7.500q2 1 5 .500l-1 4q-3 .500-5-.500z" fill="#f0bd2f"/></svg>開始</button>
  <button class="task pressed"><svg width="14" height="14" viewBox="0 0 14 14"><circle cx="7" cy="7" r="6.500" fill="#e34133"/><path d="M7 7L1.400 3.700A6.500 6.500 0 0 0 7 13.500z" fill="#42a34b"/><path d="M7 7h6.500A6.500 6.500 0 0 1 6.500 13.500z" fill="#f5ca34"/><circle cx="7" cy="7" r="3.200" fill="#fff"/><circle cx="7" cy="7" r="2.400" fill="#3e79d5"/></svg><span>國立高雄應用科技...</span></button>
  <button class="task"><svg width="15" height="13" viewBox="0 0 15 13"><path d="M1 11.500V2q0-1 1-1h4l1.500 2H12q1 0 1 1v1h1.500L13 12H2q-1 0-1-.500z" fill="#f3dc6f" stroke="#a98327"/><path d="M3 5h11l-1.500 6.500h-11z" fill="#fbf0a0"/></svg><span>社務資料處理</span></button>
  <button class="task"><svg width="14" height="14" viewBox="0 0 14 14"><rect x=".500" y=".500" width="13" height="13" fill="#e9f1fb" stroke="#3a6ab0"/><path d="M0 2l9-1v12l-9-1z" fill="#2a5ba8"/><text x="5" y="10.500" text-anchor="middle" font-family="Liberation Sans" font-weight="700" font-size="9" fill="#fff">W</text></svg><span>第<span class="latin">103</span>學年度第一學...</span></button>
  <button class="task"><svg width="14" height="14" viewBox="0 0 14 14"><path d="M2 .500h8l3 3v10H2z" fill="#fff" stroke="#b99"/><path d="M0 1h8v4H0z" fill="#c5252b"/><path d="M3 12q4-3 4-7 1 5 5 5-5 0-9 2z" fill="none" stroke="#c5252b" stroke-width="1.200"/></svg><span><span class="latin">20141117</span>第<span class="latin">103</span> 級星...</span></button>
  <button class="task"><svg width="14" height="14" viewBox="0 0 14 14"><rect x=".500" y=".500" width="13" height="13" fill="#fff" stroke="#cf5a30"/><rect x="1.500" y="1.500" width="9" height="11" fill="#d8552a"/><text x="6" y="10.500" text-anchor="middle" font-family="Liberation Sans" font-weight="700" font-size="9" fill="#fff">P</text></svg><span>社長社務資料處理(...</span></button>
  <svg class="ms-auto me-1" width="13" height="13" viewBox="0 0 13 13"><path d="M2 5.500h9l1.500 7H.500zM3 5V3h5V0" fill="none" stroke="#333"/><path d="M3 8h7M2.500 10h8" stroke="#333" stroke-dasharray="1 1"/></svg>
  <div class="tray d-flex align-items-center">
    <svg width="9" height="8" viewBox="0 0 9 8"><path d="M4 1L1 4l3 3M8 1L5 4l3 3" fill="none" stroke="#111" stroke-width="1.300"/></svg>
    <svg class="ms-1" width="14" height="14" viewBox="0 0 14 14"><path d="M2 8l8-2 3 3-7 4z" fill="#888" stroke="#555"/><path d="M1 1h4v2l4 1-1 4-5-2z" fill="#38b53c"/></svg>
    <svg width="15" height="13" viewBox="0 0 15 13"><rect x="2" y="2" width="8" height="7" fill="#33489e" stroke="#99a"/><path d="M1 11h8" stroke="#667" stroke-width="2"/><path d="M11 3q2 2 0 4M13 1q2.500 4 0 8" stroke="#777" fill="none"/></svg>
    <svg width="15" height="14" viewBox="0 0 15 14"><rect x="1" y="2" width="7" height="6" fill="#33489e" stroke="#99a"/><rect x="5" y="5" width="7" height="6" fill="#4257ad" stroke="#99a"/><path d="M7 6l7 7M14 6l-7 7" stroke="#e03930" stroke-width="2"/></svg>
    <svg width="15" height="14" viewBox="0 0 15 14"><path d="M3 1h11v8l-4 4H3z" fill="#f4ec3b" stroke="#444"/><path d="M0 2h5v3l3 3-3 1-3-4z" fill="#2c865f"/><path d="M7 9l4-5" stroke="#222" stroke-width="1.500"/></svg>
    <svg width="15" height="14" viewBox="0 0 15 14"><circle cx="6" cy="7" r="6" fill="#333"/><path d="M4 1h5L8 7h3l-5 7-4-7h3z" fill="#e23126"/><path d="M10 2q3-1 4 1l-3 7" fill="none" stroke="#333" stroke-width="1.500"/></svg>
    <svg width="15" height="15" viewBox="0 0 15 15"><circle cx="7.500" cy="7.500" r="7" fill="#3670b1"/><text x="8" y="11" text-anchor="middle" font-family="Liberation Sans" font-weight="700" font-size="11" fill="#fff">a</text></svg>
    <svg width="13" height="14" viewBox="0 0 13 14"><circle cx="6" cy="6.500" r="5" fill="#ccd" stroke="#777" stroke-width="1.500"/><path d="M3 5h2l3-2v7L5 8H3z" fill="#777"/></svg>
    <span class="ms-auto text-nowrap">下午 01:18</span>
  </div>
</footer>
</body>
</html>
